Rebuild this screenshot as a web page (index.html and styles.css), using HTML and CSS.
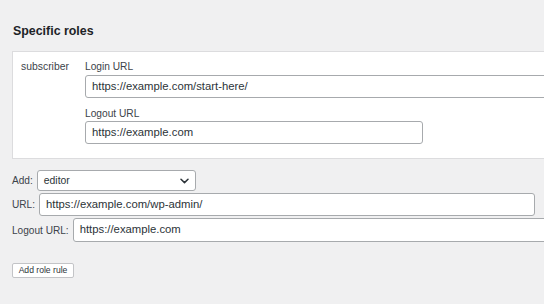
FILE: index.html
```html
<!DOCTYPE html>
<html>
<head>
<meta charset="utf-8">
<link rel="stylesheet" href="styles.css">
</head>
<body>
<div class="page">
  <h2 class="title">Specific roles</h2>
  <div class="role-box">
    <div class="role-name">subscriber</div>
    <div class="role-fields">
      <label class="field-label">Login URL</label>
      <div class="input wide">https://example.com/start-here/</div>
      <label class="field-label second">Logout URL</label>
      <div class="input medium">https://example.com</div>
    </div>
  </div>
  <div class="add-area">
    <div class="row">
      <span class="row-label">Add:</span>
      <div class="select">
        <span>editor</span>
        <svg class="chev" width="9" height="6" viewBox="0 0 9 6"><path d="M1 1.2 L4.5 4.6 L8 1.2" fill="none" stroke="#2c3338" stroke-width="1.5" stroke-linecap="round" stroke-linejoin="round"/></svg>
      </div>
    </div>
    <div class="row">
      <span class="row-label">URL:</span>
      <div class="input url">https://example.com/wp-admin/</div>
    </div>
    <div class="row">
      <span class="row-label">Logout URL:</span>
      <div class="input logout">https://example.com</div>
    </div>
  </div>
  <button class="btn">Add role rule</button>
</div>
</body>
</html>
```

FILE: styles.css
```css
html, body {
  margin: 0;
  padding: 0;
  background: #f0f0f1;
  overflow: hidden;
  width: 544px;
  height: 304px;
}
body {
  font-family: "Liberation Sans", Arial, sans-serif;
  color: #3c434a;
}
.page {
  padding: 0 0 0 12px;
  width: 700px;
}
.title {
  margin: 0;
  padding-top: 24px;
  font-size: 12.4px;
  line-height: 14px;
  font-weight: bold;
  color: #1d2327;
  padding-left: 1px;
  height: 27px;
}
.role-box {
  display: flex;
  background: #fff;
  border: 1px solid #dcdcde;
  width: 640px;
  height: 108px;
  box-sizing: border-box;
  padding: 8px 0 0 8px;
}
.role-name {
  font-size: 10.4px;
  line-height: 14px;
  width: 64px;
  color: #3c434a;
}
.role-fields {
  display: flex;
  flex-direction: column;
  align-items: flex-start;
}
.field-label {
  font-size: 10.2px;
  line-height: 14px;
  color: #3c434a;
  height: 14px;
}
.field-label.second {
  margin-top: 9px;
}
.input {
  box-sizing: border-box;
  height: 23px;
  border: 1px solid #a7aaad;
  border-radius: 3px;
  background: #fff;
  font-size: 11.3px;
  line-height: 21px;
  color: #2c3338;
  padding-left: 6px;
  white-space: nowrap;
}
.input.wide {
  width: 560px;
  margin-top: 1px;
}
.input.medium {
  width: 338px;
  margin-top: 0;
}
.add-area {
  margin-top: 11px;
  display: flex;
  flex-direction: column;
  gap: 2px;
}
.row {
  display: flex;
  align-items: center;
  gap: 4px;
}
.row-label {
  font-size: 10.1px;
  color: #3c434a;
}
.select {
  box-sizing: border-box;
  width: 159px;
  height: 21px;
  border: 1px solid #a7aaad;
  border-radius: 3px;
  background: #fff;
  display: flex;
  align-items: center;
  justify-content: space-between;
  padding: 0 6px 0 6px;
  font-size: 10.4px;
  color: #2c3338;
}
.chev {
  display: block;
}
.input.url {
  width: 496px;
}
.input.logout {
  width: 500px;
  height: 24px;
}
.btn {
  display: block;
  margin-top: 21px;
  height: 15px;
  width: 62px;
  padding: 0;
  font-family: "Liberation Sans", Arial, sans-serif;
  font-size: 8.6px;
  line-height: 13px;
  color: #2c3338;
  background: #fff;
  border: 1px solid #c3c4c7;
  border-radius: 2px;
}
```
